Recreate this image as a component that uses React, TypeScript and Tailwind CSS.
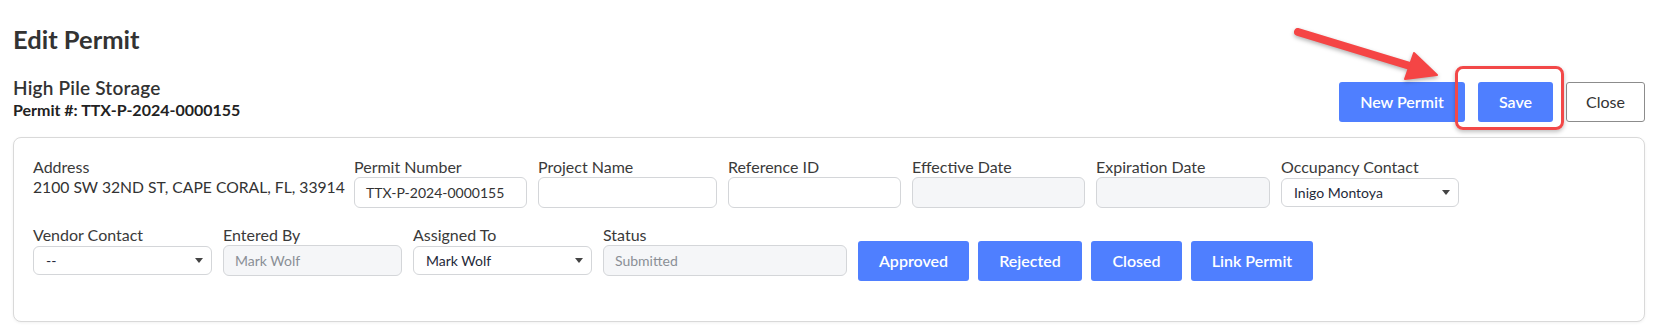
function Caret() {
  return <span className="ml-auto h-0 w-0 border-x-[4px] border-t-[5px] border-x-transparent border-t-[#444]" />;
}

function Label({ children }: { children: string }) {
  return <div className="text-[16px] leading-[20px] text-[#3a3a3a] whitespace-nowrap">{children}</div>;
}

function Field({ label, value, width, disabled }: any) {
  return (
    <div className={width}>
      <Label>{label}</Label>
      <div
        className={`h-[31px] w-full rounded-[6px] border border-[#d4d6d9] px-[11px] flex items-center text-[14px] ${
          disabled ? "bg-[#f5f6f8] text-[#8a8f96]" : "bg-white text-[#333]"
        }`}
      >
        {value}
      </div>
    </div>
  );
}

function SelectField({ label, value, width }: any) {
  return (
    <div className={width}>
      <Label>{label}</Label>
      <div className="mt-[1px] h-[29px] w-full rounded-[6px] border border-[#d4d6d9] bg-white pl-[12px] pr-[8px] flex items-center text-[14px] text-[#1f2a3a]">
        <span>{value}</span>
        <Caret />
      </div>
    </div>
  );
}

function BlueButton({ children, width }: any) {
  return (
    <button className={`h-[40px] ${width} rounded-[3px] bg-[#4f7fff] text-white text-[16px] font-semibold`}>
      {children}
    </button>
  );
}

export default function App() {
  return (
    <div className="relative min-h-[332px] bg-white px-[13px] font-['Lato',sans-serif] text-[#333]">
      <h1 className="pt-[23px] text-[25.5px] leading-[33px] font-bold text-[#333]">Edit Permit</h1>

      <div className="mt-[19px] flex items-end justify-between">
        <div className="pb-[2px]">
          <div className="text-[19px] leading-[25px] font-semibold tracking-[0.2px] text-[#333]">High Pile Storage</div>
          <div className="text-[16px] leading-[20px] font-bold text-[#222]">Permit #: TTX-P-2024-0000155</div>
        </div>
        <div className="flex items-center gap-[12px]">
          <BlueButton width="w-[126px]">New Permit</BlueButton>
          <BlueButton width="w-[75px] ml-[1px]">Save</BlueButton>
          <button className="h-[40px] w-[79px] ml-[1px] rounded-[3px] border border-[#8c8c8c] bg-white text-[16px] text-[#333]">
            Close
          </button>
        </div>
      </div>

      <div className="mt-[15px] rounded-[8px] border border-[#d9d9d9] bg-white pl-[19px] pr-[19px] pt-[19px] pb-[40px] shadow-[0_1px_3px_rgba(0,0,0,0.06)]">
        <div className="flex items-start gap-[11px]">
          <div className="w-[310px]">
            <Label>Address</Label>
            <div className="text-[15.7px] leading-[20px] text-[#333] whitespace-nowrap">2100 SW 32ND ST, CAPE CORAL, FL, 33914</div>
          </div>
          <Field label="Permit Number" value="TTX-P-2024-0000155" width="w-[173px]" />
          <Field label="Project Name" value="" width="w-[179px]" />
          <Field label="Reference ID" value="" width="w-[173px]" />
          <Field label="Effective Date" value="" width="w-[173px]" disabled />
          <Field label="Expiration Date" value="" width="w-[174px]" disabled />
          <SelectField label="Occupancy Contact" value="Inigo Montoya" width="w-[178px]" />
        </div>

        <div className="mt-[17px] flex items-start gap-[11px]">
          <SelectField label="Vendor Contact" value="--" width="w-[179px]" />
          <Field label="Entered By" value="Mark Wolf" width="w-[179px]" disabled />
          <SelectField label="Assigned To" value="Mark Wolf" width="w-[179px]" />
          <Field label="Status" value="Submitted" width="w-[244px]" disabled />
          <div className="mt-[16px] flex gap-[9px]">
            <BlueButton width="w-[111px]">Approved</BlueButton>
            <BlueButton width="w-[104px]">Rejected</BlueButton>
            <BlueButton width="w-[91px]">Closed</BlueButton>
            <BlueButton width="w-[122px]">Link Permit</BlueButton>
          </div>
        </div>
      </div>

      {/* annotation: highlight box around Save */}
      <div className="absolute left-[1455px] top-[66px] h-[64px] w-[109px] rounded-[8px] border-[3px] border-[#f24848] shadow-[0_2px_4px_rgba(0,0,0,0.25)]" />

      {/* annotation: arrow */}
      <svg
        className="absolute left-[1288px] top-[18px] drop-shadow-[0_2px_2px_rgba(0,0,0,0.3)]"
        width="165"
        height="75"
        viewBox="0 0 165 75"
      >
        <line x1="10" y1="14" x2="122" y2="48" stroke="#f54545" strokeWidth="8" strokeLinecap="round" />
        <polygon points="149,57 126,35 117,61" fill="#f54545" stroke="#f54545" strokeWidth="2" strokeLinejoin="round" />
      </svg>
    </div>
  );
}
